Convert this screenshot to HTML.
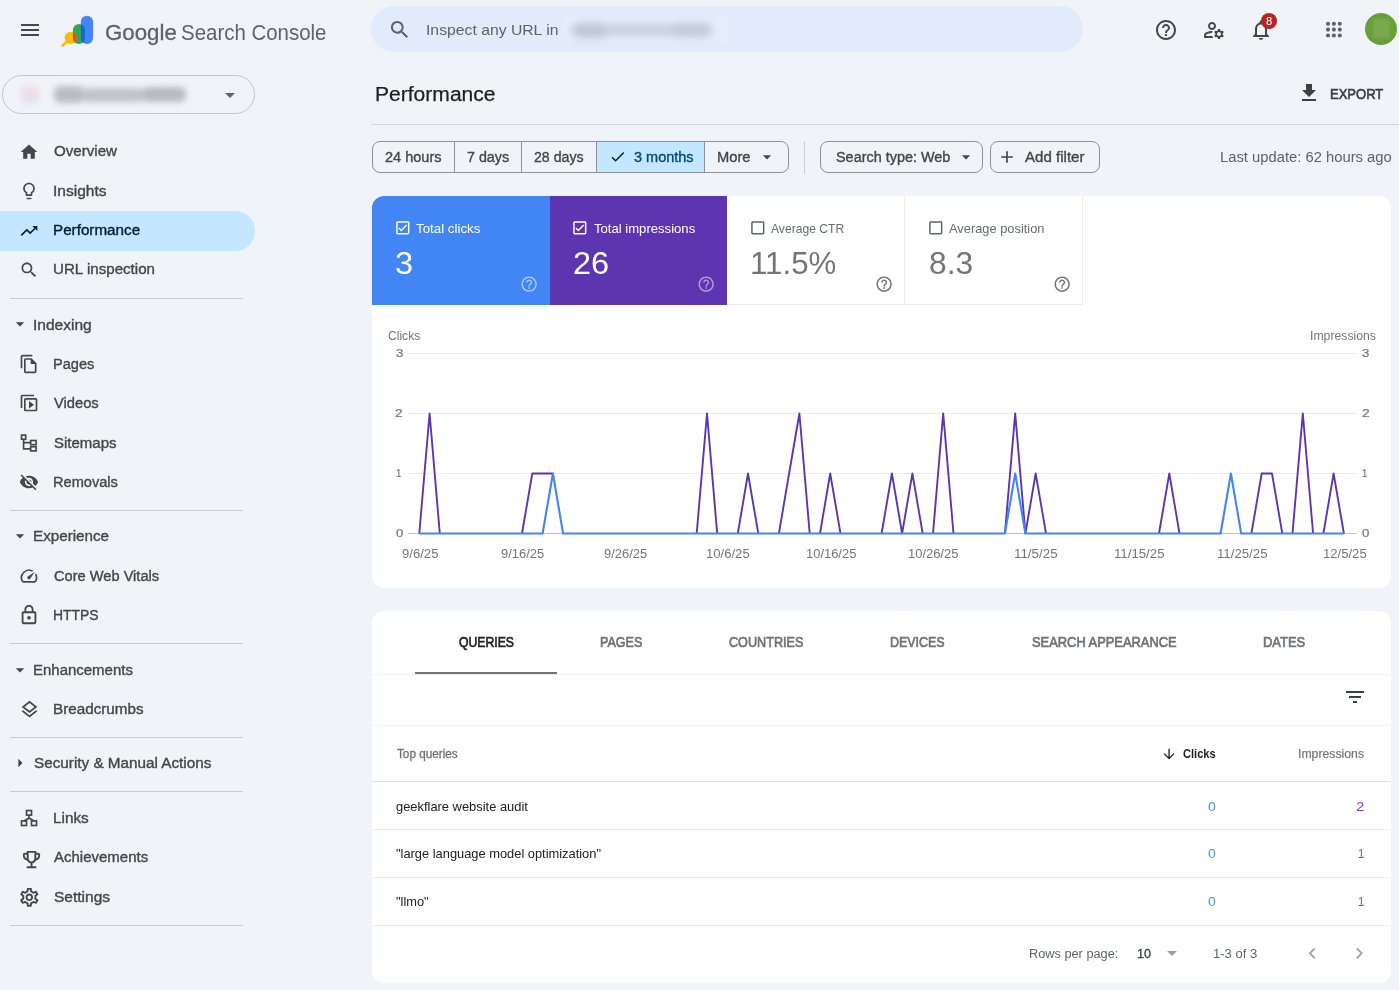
<!DOCTYPE html>
<html lang="en"><head><meta charset="utf-8"><title>Performance - Google Search Console</title>
<style>
html,body{margin:0;padding:0}
body{background:#f0f4f9;font-family:"Liberation Sans", sans-serif;}
#app{position:relative;width:1399px;height:990px;overflow:hidden;background:#f0f4f9}
.t{position:absolute;white-space:pre;line-height:1;transform-origin:0 50%;font-family:"Liberation Sans", sans-serif}
</style></head><body><div id="app">
<header>
<svg style="position:absolute;left:18px;top:18px;" width="24" height="24" viewBox="0 0 24 24"><path fill="#444746" d="M3 18h18v-2H3v2zm0-5h18v-2H3v2zm0-7v2h18V6H3z"/></svg>
<svg style="position:absolute;left:55px;top:8px" width="50" height="46" viewBox="55 8 50 46">
<rect x="80.8" y="15.7" width="12.3" height="28.3" rx="6.15" fill="#4285f4"/>
<rect x="72.9" y="24" width="12.1" height="20" rx="6.05" fill="#34a853"/>
<clipPath id="cg"><rect x="72.9" y="24" width="12.1" height="20" rx="6.05"/></clipPath>
<rect x="80.8" y="15.7" width="12.3" height="28.3" rx="6.15" fill="#1967d2" clip-path="url(#cg)"/>
<line x1="67.2" y1="41.3" x2="62.6" y2="45.6" stroke="#fbbc04" stroke-width="2.6" stroke-linecap="round"/>
<circle cx="70.65" cy="37.85" r="6.05" fill="#fbbc04"/>
<circle cx="70.65" cy="37.85" r="6.05" fill="#ea4335" clip-path="url(#cg)"/>
</svg>
<div style="position:absolute;left:371.25px;top:6px;width:711.25px;height:46px;background:#e2ebfb;border-radius:23px"></div>
<svg style="position:absolute;left:387.5px;top:18px;" width="23.5" height="23.5" viewBox="0 0 24 24"><path fill="#5f6368" d="M15.5 14h-.79l-.28-.27C15.41 12.59 16 11.11 16 9.5 16 5.91 13.09 3 9.5 3S3 5.91 3 9.5 5.91 16 9.5 16c1.61 0 3.09-.59 4.23-1.57l.27.28v.79l5 4.99L20.49 19l-4.99-5zm-6 0C7.01 14 5 11.99 5 9.5S7.01 5 9.5 5 14 7.01 14 9.5 11.99 14 9.5 14z"/></svg>
<div style="position:absolute;left:562px;top:16px;width:166px;height:27px;background:rgba(255,255,255,.16);filter:blur(2px)"></div>
<div style="position:absolute;left:560px;top:12px;width:170px;height:36px;filter:blur(4.5px);opacity:.8"><div style="position:absolute;left:12px;top:11px;width:36px;height:15px;border-radius:7px;background:#b3bccf"></div><div style="position:absolute;left:44px;top:12px;width:70px;height:12px;border-radius:6px;background:#c0c8da"></div><div style="position:absolute;left:110px;top:11px;width:42px;height:14px;border-radius:7px;background:#b8c0d3"></div></div>
<svg style="position:absolute;left:1154px;top:17.5px;" width="24" height="24" viewBox="0 0 24 24"><path fill="#444746" d="M11 18h2v-2h-2v2zm1-16C6.48 2 2 6.48 2 12s4.48 10 10 10 10-4.48 10-10S17.52 2 12 2zm0 18c-4.41 0-8-3.59-8-8s3.59-8 8-8 8 3.59 8 8-3.59 8-8 8zm0-14c-2.21 0-4 1.79-4 4h2c0-1.1.9-2 2-2s2 .9 2 2c0 2-3 1.75-3 5h2c0-2.25 3-2.5 3-5 0-2.21-1.79-4-4-4z"/></svg>
<svg style="position:absolute;left:1201.75px;top:18px;" width="24" height="24" viewBox="0 0 24 24"><path fill="#444746" d="M4 18v-.65c0-.34.16-.66.41-.81C6.1 15.53 8.03 15 10 15c.03 0 .05 0 .08.01.1-.7.3-1.37.59-1.98-.22-.02-.44-.03-.67-.03-2.42 0-4.68.67-6.61 1.82-.88.52-1.39 1.5-1.39 2.53V20h9.26c-.42-.6-.75-1.28-.97-2H4zM10 12c2.21 0 4-1.79 4-4s-1.79-4-4-4-4 1.79-4 4 1.79 4 4 4zm0-6c1.1 0 2 .9 2 2s-.9 2-2 2-2-.9-2-2 .9-2 2-2zM20.75 16c0-.22-.03-.42-.06-.63l1.14-1.01-1-1.73-1.45.49c-.32-.27-.68-.48-1.08-.63L18 11h-2l-.3 1.49c-.4.15-.76.36-1.08.63l-1.45-.49-1 1.73 1.14 1.01c-.03.21-.06.41-.06.63s.03.42.06.63l-1.14 1.01 1 1.73 1.45-.49c.32.27.68.48 1.08.63L16 21h2l.3-1.49c.4-.15.76-.36 1.08-.63l1.45.49 1-1.73-1.14-1.01c.03-.21.06-.41.06-.63zM17 18c-1.1 0-2-.9-2-2s.9-2 2-2 2 .9 2 2-.9 2-2 2z"/></svg>
<svg style="position:absolute;left:1249.2px;top:17.5px;" width="24" height="24" viewBox="0 0 24 24"><path fill="#444746" d="M12 22c1.1 0 2-.9 2-2h-4c0 1.1.9 2 2 2zm6-6v-5c0-3.07-1.63-5.64-4.5-6.32V4c0-.83-.67-1.5-1.5-1.5s-1.5.67-1.5 1.5v.68C7.64 5.36 6 7.92 6 11v5l-2 2v1h16v-1l-2-2zm-2 1H8v-6c0-2.48 1.51-4.5 4-4.5s4 2.02 4 4.5v6z"/></svg>
<div style="position:absolute;left:1260.5px;top:13px;width:16px;height:16px;border-radius:8px;background:#b8251f"></div>
<svg style="position:absolute;left:0;top:0" width="1399" height="60" fill="#5f6368"><circle cx="1328" cy="23.7" r="2.05"/><circle cx="1328" cy="29.6" r="2.05"/><circle cx="1328" cy="35.5" r="2.05"/><circle cx="1333.9" cy="23.7" r="2.05"/><circle cx="1333.9" cy="29.6" r="2.05"/><circle cx="1333.9" cy="35.5" r="2.05"/><circle cx="1339.8" cy="23.7" r="2.05"/><circle cx="1339.8" cy="29.6" r="2.05"/><circle cx="1339.8" cy="35.5" r="2.05"/></svg>
<div style="position:absolute;left:1365.1px;top:13.4px;width:32px;height:32px;border-radius:16px;background:#689f38;overflow:hidden"><div style="position:absolute;left:8px;top:5.5px;width:16.5px;height:19.5px;background:#79a84e;filter:blur(1.6px)"></div></div>
<div class="t" style="left:104.51px;top:22px;font-size:22.5px;color:#5f6368;-webkit-text-stroke:0.3px #5f6368;transform:scaleX(0.9894);">Google</div>
<div class="t" style="left:181.15px;top:23px;font-size:21.5px;color:#5f6368;transform:scaleX(0.9510);">Search Console</div>
<div class="t" style="left:426.28px;top:22px;font-size:15.5px;color:#5f6368;transform:scaleX(1.0156);">Inspect any URL in</div>
<div class="t" style="left:1265.89px;top:16px;font-size:11px;color:#fff;transform:scaleX(1.0286);">8</div>
</header>
<nav>
<div style="position:absolute;left:2px;top:75px;width:250.5px;height:37px;background:transparent;border:1px solid #c4c7c5;border-radius:20px"></div>
<div style="position:absolute;left:21px;top:86px;width:18px;height:18px;background:linear-gradient(#f6d5d5,#dcd9f3);filter:blur(3px);border-radius:3px;opacity:.75"></div>
<div style="position:absolute;left:44px;top:78px;width:156px;height:34px;filter:blur(3.2px);opacity:.8"><div style="position:absolute;left:10px;top:8px;width:30px;height:17px;border-radius:6px;background:#abafb4"></div><div style="position:absolute;left:38px;top:10px;width:62px;height:14px;border-radius:6px;background:#b3b7bb"></div><div style="position:absolute;left:98px;top:9px;width:44px;height:15px;border-radius:6px;background:#a9adb2"></div></div>
<svg style="position:absolute;left:218.3px;top:83px;" width="24" height="24" viewBox="0 0 24 24"><path fill="#5f6368" d="M7 10l5 5 5-5z"/></svg>
<div style="position:absolute;left:0px;top:211px;width:255px;height:39.5px;background:#c2e7ff;border-radius:0 20px 20px 0"></div>
<div style="position:absolute;left:10px;top:298px;width:232.6px;height:1px;background:#c9ccd0;"></div>
<div style="position:absolute;left:10px;top:510px;width:232.6px;height:1px;background:#c9ccd0;"></div>
<div style="position:absolute;left:10px;top:643px;width:232.6px;height:1px;background:#c9ccd0;"></div>
<div style="position:absolute;left:10px;top:737px;width:232.6px;height:1px;background:#c9ccd0;"></div>
<div style="position:absolute;left:10px;top:791px;width:232.6px;height:1px;background:#c9ccd0;"></div>
<div style="position:absolute;left:10px;top:925px;width:232.6px;height:1px;background:#c9ccd0;"></div>
<svg style="position:absolute;left:19.2px;top:142.0px;" width="20" height="20" viewBox="0 0 24 24"><path fill="#444746" d="M10 20v-6h4v6h5v-8h3L12 3 2 12h3v8z"/></svg>
<svg style="position:absolute;left:19.2px;top:181.3px;" width="20" height="20" viewBox="0 0 24 24"><path fill="#444746" d="M9 21c0 .55.45 1 1 1h4c.55 0 1-.45 1-1v-1H9v1zm3-19C8.14 2 5 5.14 5 9c0 2.38 1.19 4.47 3 5.74V17c0 .55.45 1 1 1h6c.55 0 1-.45 1-1v-2.26c1.81-1.27 3-3.36 3-5.74 0-3.86-3.14-7-7-7zm2.85 11.1l-.85.6V16h-4v-2.3l-.85-.6C7.8 12.16 7 10.63 7 9c0-2.76 2.24-5 5-5s5 2.24 5 5c0 1.63-.8 3.16-2.15 4.1z"/></svg>
<svg style="position:absolute;left:19.2px;top:220.6px;" width="20" height="20" viewBox="0 0 24 24"><path fill="#001d35" d="M16 6l2.29 2.29-4.88 4.88-4-4L2 16.59 3.41 18l6-6 4 4 6.3-6.29L22 12V6z"/></svg>
<svg style="position:absolute;left:19.2px;top:260.0px;" width="20" height="20" viewBox="0 0 24 24"><path fill="#444746" d="M15.5 14h-.79l-.28-.27C15.41 12.59 16 11.11 16 9.5 16 5.91 13.09 3 9.5 3S3 5.91 3 9.5 5.91 16 9.5 16c1.61 0 3.09-.59 4.23-1.57l.27.28v.79l5 4.99L20.49 19l-4.99-5zm-6 0C7.01 14 5 11.99 5 9.5S7.01 5 9.5 5 14 7.01 14 9.5 11.99 14 9.5 14z"/></svg>
<svg style="position:absolute;left:19.2px;top:354.0px;" width="20" height="20" viewBox="0 0 24 24"><path fill="#444746" d="M16 1H4c-1.1 0-2 .9-2 2v14h2V3h12V1zm-1 4H8c-1.1 0-1.99.9-1.99 2L6 21c0 1.1.89 2 1.99 2H19c1.1 0 2-.9 2-2V11l-6-6zM8 21V7h6v5h5v9H8z"/></svg>
<svg style="position:absolute;left:19.2px;top:393.4px;transform:scaleY(-1)" width="20" height="20" viewBox="0 0 24 24"><path fill="#444746" d="M4 6H2v14c0 1.1.9 2 2 2h14v-2H4V6zm16-4H8c-1.1 0-2 .9-2 2v12c0 1.1.9 2 2 2h12c1.1 0 2-.9 2-2V4c0-1.1-.9-2-2-2zm0 14H8V4h12v12zM12 5.5v9l6-4.5z"/></svg>
<svg style="position:absolute;left:19.2px;top:472.4px;" width="20" height="20" viewBox="0 0 24 24"><path fill="#444746" d="M12 7c2.76 0 5 2.24 5 5 0 .65-.13 1.26-.36 1.83l2.92 2.92c1.51-1.26 2.7-2.89 3.43-4.75-1.73-4.39-6-7.5-11-7.5-1.4 0-2.74.25-3.98.7l2.16 2.16C10.74 7.13 11.35 7 12 7zM2 4.27l2.28 2.28.46.46C3.08 8.3 1.78 10.02 1 12c1.73 4.39 6 7.5 11 7.5 1.55 0 3.03-.3 4.38-.84l.42.42L19.73 22 21 20.73 3.27 3 2 4.27zM7.53 9.8l1.55 1.55c-.05.21-.08.43-.08.65 0 1.66 1.34 3 3 3 .22 0 .44-.03.65-.08l1.55 1.55c-.67.33-1.41.53-2.2.53-2.76 0-5-2.24-5-5 0-.79.2-1.53.53-2.2zm4.31-.78l3.15 3.15.02-.16c0-1.66-1.34-3-3-3l-.17.01z"/></svg>
<svg style="position:absolute;left:19.0px;top:566.0px;" width="20" height="20" viewBox="0 0 24 24"><path fill="#444746" d="M20.38 8.57l-1.23 1.85a8 8 0 0 1-.22 7.58H5.07A8 8 0 0 1 15.58 6.85l1.85-1.23A10 10 0 0 0 3.35 19a2 2 0 0 0 1.72 1h13.85a2 2 0 0 0 1.74-1 10 10 0 0 0-.27-10.44zm-9.79 6.84a2 2 0 0 0 2.83 0l5.66-8.49-8.49 5.66a2 2 0 0 0 0 2.83z"/></svg>
<svg style="position:absolute;left:18.2px;top:603.8px;" width="22" height="22" viewBox="0 0 24 24"><path fill="#444746" d="M18 8h-1V6c0-2.76-2.24-5-5-5S7 3.24 7 6v2H6c-1.1 0-2 .9-2 2v10c0 1.1.9 2 2 2h12c1.1 0 2-.9 2-2V10c0-1.1-.9-2-2-2zM9 6c0-1.66 1.34-3 3-3s3 1.34 3 3v2H9V6zm9 14H6V10h12v10zm-6-3c1.1 0 2-.9 2-2s-.9-2-2-2-2 .9-2 2 .9 2 2 2z"/></svg>
<svg style="position:absolute;left:18.7px;top:698.9px;" width="21" height="21" viewBox="0 0 24 24"><path fill="#444746" d="M11.99 18.54l-7.37-5.73L3 14.07l9 7 9-7-1.63-1.27-7.38 5.74zM12 16l7.36-5.73L21 9l-9-7-9 7 1.63 1.27L12 16zm0-11.47L17.74 9 12 13.47 6.26 9 12 4.53z"/></svg>
<svg style="position:absolute;left:19.5px;top:848.3px;" width="23" height="23" viewBox="0 0 24 24"><path fill="#444746" d="M19 5h-2V3H7v2H5c-1.1 0-2 .9-2 2v1c0 2.55 1.92 4.63 4.39 4.94.63 1.5 1.98 2.63 3.61 2.96V19H7v2h10v-2h-4v-3.1c1.63-.33 2.98-1.46 3.61-2.96C19.08 12.63 21 10.55 21 8V7c0-1.1-.9-2-2-2zM5 8V7h2v3.82C5.84 10.4 5 9.3 5 8zm7 6c-1.65 0-3-1.35-3-3V5h6v6c0 1.65-1.35 3-3 3zm7-6c0 1.3-.84 2.4-2 2.82V7h2v1z"/></svg>
<svg style="position:absolute;left:17.9px;top:885.7px;" width="22.6" height="22.6" viewBox="0 0 24 24"><path fill="#444746" d="M19.43 12.98c.04-.32.07-.64.07-.98 0-.34-.03-.66-.07-.98l2.11-1.65c.19-.15.24-.42.12-.64l-2-3.46c-.09-.16-.26-.25-.44-.25-.06 0-.12.01-.17.03l-2.49 1c-.52-.4-1.08-.73-1.69-.98l-.38-2.65C14.46 2.18 14.25 2 14 2h-4c-.25 0-.46.18-.49.42l-.38 2.65c-.61.25-1.17.59-1.69.98l-2.49-1c-.06-.02-.12-.03-.18-.03-.17 0-.34.09-.43.25l-2 3.46c-.13.22-.07.49.12.64l2.11 1.65c-.04.32-.07.65-.07.98 0 .33.03.66.07.98l-2.11 1.65c-.19.15-.24.42-.12.64l2 3.46c.09.16.26.25.44.25.06 0 .12-.01.17-.03l2.49-1c.52.4 1.08.73 1.69.98l.38 2.65c.03.24.24.42.49.42h4c.25 0 .46-.18.49-.42l.38-2.65c.61-.25 1.17-.59 1.69-.98l2.49 1c.06.02.12.03.18.03.17 0 .34-.09.43-.25l2-3.46c.12-.22.07-.49-.12-.64l-2.11-1.65zm-1.98-1.71c.04.31.05.52.05.73 0 .21-.02.43-.05.73l-.14 1.13.89.7 1.08.84-.7 1.21-1.27-.51-1.04-.42-.9.68c-.43.32-.84.56-1.25.73l-1.06.43-.16 1.13-.2 1.35h-1.4l-.19-1.35-.16-1.13-1.06-.43c-.43-.18-.83-.41-1.23-.71l-.91-.7-1.06.43-1.27.51-.7-1.21 1.08-.84.89-.7-.14-1.13c-.03-.31-.05-.54-.05-.74s.02-.43.05-.73l.14-1.13-.89-.7-1.08-.84.7-1.21 1.27.51 1.04.42.9-.68c.43-.32.84-.56 1.25-.73l1.06-.43.16-1.13.2-1.35h1.39l.19 1.35.16 1.13 1.06.43c.43.18.83.41 1.23.71l.91.7 1.06-.43 1.27-.51.7 1.21-1.07.85-.89.7.14 1.13zM12 8c-2.21 0-4 1.79-4 4s1.79 4 4 4 4-1.79 4-4-1.79-4-4-4zm0 6c-1.1 0-2-.9-2-2s.9-2 2-2 2 .9 2 2-.9 2-2 2z"/></svg>
<svg style="position:absolute;left:19.2px;top:433px" width="20" height="20" viewBox="0 0 24 24" fill="none" stroke="#444746" stroke-width="2"><rect x="3" y="2.5" width="5" height="5"/><rect x="14" y="9" width="6.5" height="5"/><rect x="14" y="16.5" width="6.5" height="5"/><path d="M5.5 7.5V19H14M5.5 11.5H14"/></svg>
<svg style="position:absolute;left:19.2px;top:808px" width="20" height="20" viewBox="0 0 24 24" fill="none" stroke="#444746" stroke-width="2"><rect x="9" y="3" width="6" height="5.5"/><rect x="3" y="15.5" width="6" height="5.5"/><rect x="15" y="15.5" width="6" height="5.5"/><path d="M12 8.5V12L6 15.5M12 12l6 3.5"/></svg>
<svg style="position:absolute;left:9.8px;top:314.40000000000003px;" width="20" height="20" viewBox="0 0 24 24"><path fill="#444746" d="M7 10l5 5 5-5z"/></svg>
<svg style="position:absolute;left:9.8px;top:525.9px;" width="20" height="20" viewBox="0 0 24 24"><path fill="#444746" d="M7 10l5 5 5-5z"/></svg>
<svg style="position:absolute;left:9.8px;top:659.6px;" width="20" height="20" viewBox="0 0 24 24"><path fill="#444746" d="M7 10l5 5 5-5z"/></svg>
<svg style="position:absolute;left:9.6px;top:753.2px;" width="20" height="20" viewBox="0 0 24 24"><path fill="#444746" d="M10 17l5-5-5-5v10z"/></svg>
<div class="t" style="left:53.56px;top:144px;font-size:14px;color:#444746;-webkit-text-stroke:0.35px #444746;transform:scaleX(1.0793);">Overview</div>
<div class="t" style="left:52.99px;top:184px;font-size:14px;color:#444746;-webkit-text-stroke:0.35px #444746;transform:scaleX(1.1106);">Insights</div>
<div class="t" style="left:53.01px;top:223px;font-size:14px;color:#001d35;-webkit-text-stroke:0.35px #001d35;transform:scaleX(1.0870);">Performance</div>
<div class="t" style="left:53.02px;top:262px;font-size:14px;color:#444746;-webkit-text-stroke:0.35px #444746;transform:scaleX(1.0803);">URL inspection</div>
<div class="t" style="left:33.19px;top:318px;font-size:14px;color:#444746;-webkit-text-stroke:0.35px #444746;transform:scaleX(1.1083);">Indexing</div>
<div class="t" style="left:53.06px;top:357px;font-size:14px;color:#444746;-webkit-text-stroke:0.35px #444746;transform:scaleX(1.0390);">Pages</div>
<div class="t" style="left:54.36px;top:396px;font-size:14px;color:#444746;-webkit-text-stroke:0.35px #444746;transform:scaleX(1.0494);">Videos</div>
<div class="t" style="left:53.56px;top:436px;font-size:14px;color:#444746;-webkit-text-stroke:0.35px #444746;transform:scaleX(1.0713);">Sitemaps</div>
<div class="t" style="left:53.06px;top:475px;font-size:14px;color:#444746;-webkit-text-stroke:0.35px #444746;transform:scaleX(1.0426);">Removals</div>
<div class="t" style="left:33.21px;top:529px;font-size:14px;color:#444746;-webkit-text-stroke:0.35px #444746;transform:scaleX(1.0861);">Experience</div>
<div class="t" style="left:53.58px;top:569px;font-size:14px;color:#444746;-webkit-text-stroke:0.35px #444746;transform:scaleX(1.0446);">Core Web Vitals</div>
<div class="t" style="left:53.11px;top:608px;font-size:14px;color:#444746;-webkit-text-stroke:0.35px #444746;transform:scaleX(0.9933);">HTTPS</div>
<div class="t" style="left:33.23px;top:663px;font-size:14px;color:#444746;-webkit-text-stroke:0.35px #444746;transform:scaleX(1.0696);">Enhancements</div>
<div class="t" style="left:53.11px;top:702px;font-size:14px;color:#444746;-webkit-text-stroke:0.35px #444746;transform:scaleX(1.0878);">Breadcrumbs</div>
<div class="t" style="left:33.75px;top:756px;font-size:14px;color:#444746;-webkit-text-stroke:0.35px #444746;transform:scaleX(1.0906);">Security &amp; Manual Actions</div>
<div class="t" style="left:53.11px;top:811px;font-size:14px;color:#444746;-webkit-text-stroke:0.35px #444746;transform:scaleX(1.0921);">Links</div>
<div class="t" style="left:54.47px;top:850px;font-size:14px;color:#444746;-webkit-text-stroke:0.35px #444746;transform:scaleX(1.0705);">Achievements</div>
<div class="t" style="left:53.65px;top:890px;font-size:14px;color:#444746;-webkit-text-stroke:0.35px #444746;transform:scaleX(1.1075);">Settings</div>
</nav>
<main>
<svg style="position:absolute;left:1297.2px;top:80.8px;" width="24" height="24" viewBox="0 0 24 24"><path fill="#3c4043" d="M19 9h-4V3H9v6H5l7 7 7-7zM5 18v2h14v-2H5z"/></svg>
<div style="position:absolute;left:371px;top:124px;width:1028px;height:1px;background:#d3d7dc;"></div>
<div style="position:absolute;left:372px;top:141px;width:414.5px;height:30px;background:transparent;border:1px solid #8e9297;border-radius:8px"></div>
<div style="position:absolute;left:597px;top:142px;width:107.5px;height:30px;background:#c2e7ff;"></div>
<div style="position:absolute;left:454px;top:141px;width:1px;height:32px;background:#8e9297;"></div>
<div style="position:absolute;left:521px;top:141px;width:1px;height:32px;background:#8e9297;"></div>
<div style="position:absolute;left:596px;top:141px;width:1px;height:32px;background:#8e9297;"></div>
<div style="position:absolute;left:704px;top:141px;width:1px;height:32px;background:#8e9297;"></div>
<svg style="position:absolute;left:608.5px;top:148px;" width="17.5" height="17.5" viewBox="0 0 24 24"><path fill="#001d35" d="M9 16.17L4.83 12l-1.42 1.41L9 19 21 7l-1.41-1.41z"/></svg>
<svg style="position:absolute;left:757px;top:147px;" width="20" height="20" viewBox="0 0 24 24"><path fill="#444746" d="M7 10l5 5 5-5z"/></svg>
<div style="position:absolute;left:804px;top:141px;width:1px;height:32px;background:#c9ccd0;"></div>
<div style="position:absolute;left:820px;top:141px;width:160.5px;height:30px;background:transparent;border:1px solid #8e9297;border-radius:8px"></div>
<svg style="position:absolute;left:956px;top:147px;" width="20" height="20" viewBox="0 0 24 24"><path fill="#444746" d="M7 10l5 5 5-5z"/></svg>
<div style="position:absolute;left:990px;top:141px;width:108px;height:30px;background:transparent;border:1px solid #8e9297;border-radius:8px"></div>
<svg style="position:absolute;left:997px;top:147px;" width="20" height="20" viewBox="0 0 24 24"><path fill="#444746" d="M19 13h-6v6h-2v-6H5v-2h6V5h2v6h6v2z"/></svg>
<div style="position:absolute;left:372px;top:196px;width:1019px;height:391.5px;background:#fff;border-radius:12px"></div>
<div style="position:absolute;left:372px;top:196px;width:178px;height:109px;background:#4285f4;border-radius:12px 0 0 0"></div>
<div style="position:absolute;left:550px;top:196px;width:177px;height:109px;background:#5e35b1;"></div>
<div style="position:absolute;left:727px;top:196px;width:177.5px;height:109px;background:#fff;border-right:1px solid #ececec;border-bottom:1px solid #ececec;box-sizing:border-box"></div>
<div style="position:absolute;left:904.5px;top:196px;width:178px;height:109px;background:#fff;border-right:1px solid #ececec;border-bottom:1px solid #ececec;box-sizing:border-box"></div>
<svg style="position:absolute;left:393.55px;top:219.05px;" width="17.6" height="17.6" viewBox="0 0 24 24"><path fill="#fff" d="M19 3H5c-1.1 0-2 .9-2 2v14c0 1.1.9 2 2 2h14c1.1 0 2-.9 2-2V5c0-1.1-.9-2-2-2zm0 16H5V5h14v14zM17.99 9l-1.41-1.42-6.59 6.59-2.58-2.57-1.42 1.41 4 3.99z"/></svg>
<svg style="position:absolute;left:571.05px;top:219.05px;" width="17.6" height="17.6" viewBox="0 0 24 24"><path fill="#fff" d="M19 3H5c-1.1 0-2 .9-2 2v14c0 1.1.9 2 2 2h14c1.1 0 2-.9 2-2V5c0-1.1-.9-2-2-2zm0 16H5V5h14v14zM17.99 9l-1.41-1.42-6.59 6.59-2.58-2.57-1.42 1.41 4 3.99z"/></svg>
<svg style="position:absolute;left:749.05px;top:219.05px;" width="17.6" height="17.6" viewBox="0 0 24 24"><path fill="#5f6368" d="M19 5v14H5V5h14m0-2H5c-1.1 0-2 .9-2 2v14c0 1.1.9 2 2 2h14c1.1 0 2-.9 2-2V5c0-1.1-.9-2-2-2z"/></svg>
<svg style="position:absolute;left:926.65px;top:219.05px;" width="17.6" height="17.6" viewBox="0 0 24 24"><path fill="#5f6368" d="M19 5v14H5V5h14m0-2H5c-1.1 0-2 .9-2 2v14c0 1.1.9 2 2 2h14c1.1 0 2-.9 2-2V5c0-1.1-.9-2-2-2z"/></svg>
<svg style="position:absolute;left:519.85px;top:275.35px;" width="18.3" height="18.3" viewBox="0 0 24 24"><path fill="rgba(255,255,255,.55)" d="M11 18h2v-2h-2v2zm1-16C6.48 2 2 6.48 2 12s4.48 10 10 10 10-4.48 10-10S17.52 2 12 2zm0 18c-4.41 0-8-3.59-8-8s3.59-8 8-8 8 3.59 8 8-3.59 8-8 8zm0-14c-2.21 0-4 1.79-4 4h2c0-1.1.9-2 2-2s2 .9 2 2c0 2-3 1.75-3 5h2c0-2.25 3-2.5 3-5 0-2.21-1.79-4-4-4z"/></svg>
<svg style="position:absolute;left:697.25px;top:275.35px;" width="18.3" height="18.3" viewBox="0 0 24 24"><path fill="rgba(255,255,255,.5)" d="M11 18h2v-2h-2v2zm1-16C6.48 2 2 6.48 2 12s4.48 10 10 10 10-4.48 10-10S17.52 2 12 2zm0 18c-4.41 0-8-3.59-8-8s3.59-8 8-8 8 3.59 8 8-3.59 8-8 8zm0-14c-2.21 0-4 1.79-4 4h2c0-1.1.9-2 2-2s2 .9 2 2c0 2-3 1.75-3 5h2c0-2.25 3-2.5 3-5 0-2.21-1.79-4-4-4z"/></svg>
<svg style="position:absolute;left:874.85px;top:275.35px;" width="18.3" height="18.3" viewBox="0 0 24 24"><path fill="#757575" d="M11 18h2v-2h-2v2zm1-16C6.48 2 2 6.48 2 12s4.48 10 10 10 10-4.48 10-10S17.52 2 12 2zm0 18c-4.41 0-8-3.59-8-8s3.59-8 8-8 8 3.59 8 8-3.59 8-8 8zm0-14c-2.21 0-4 1.79-4 4h2c0-1.1.9-2 2-2s2 .9 2 2c0 2-3 1.75-3 5h2c0-2.25 3-2.5 3-5 0-2.21-1.79-4-4-4z"/></svg>
<svg style="position:absolute;left:1052.55px;top:275.35px;" width="18.3" height="18.3" viewBox="0 0 24 24"><path fill="#757575" d="M11 18h2v-2h-2v2zm1-16C6.48 2 2 6.48 2 12s4.48 10 10 10 10-4.48 10-10S17.52 2 12 2zm0 18c-4.41 0-8-3.59-8-8s3.59-8 8-8 8 3.59 8 8-3.59 8-8 8zm0-14c-2.21 0-4 1.79-4 4h2c0-1.1.9-2 2-2s2 .9 2 2c0 2-3 1.75-3 5h2c0-2.25 3-2.5 3-5 0-2.21-1.79-4-4-4z"/></svg>
<svg style="position:absolute;left:0;top:320px" width="1399" height="260" viewBox="0 320 1399 260"><line x1="408" x2="1356" y1="353.5" y2="353.5" stroke="#ebebeb" stroke-width="1"/><line x1="408" x2="1356" y1="413.5" y2="413.5" stroke="#ebebeb" stroke-width="1"/><line x1="408" x2="1356" y1="473.5" y2="473.5" stroke="#ebebeb" stroke-width="1"/><line x1="408" x2="1356" y1="533.5" y2="533.5" stroke="#bdbdbd" stroke-width="1"/><g fill="none" stroke="#5e35b1" stroke-width="1.9" stroke-linejoin="round"><polyline points="419.3,533.5 429.6,413.5 439.8,533.5"/><polyline points="522.0,533.5 532.3,473.5 542.6,473.5 552.9,473.5"/><polyline points="696.7,533.5 707.0,413.5 717.2,533.5"/><polyline points="737.8,533.5 748.0,473.5 758.3,533.5"/><polyline points="778.9,533.5 789.1,473.5 799.4,413.5 809.7,533.5"/><polyline points="820.0,533.5 830.2,473.5 840.5,533.5"/><polyline points="881.6,533.5 891.9,473.5 902.1,533.5"/><polyline points="902.1,533.5 912.4,473.5 922.7,533.5"/><polyline points="933.0,533.5 943.2,413.5 953.5,533.5"/><polyline points="1004.9,533.5 1015.2,413.5 1025.4,533.5"/><polyline points="1025.4,533.5 1035.7,473.5 1046.0,533.5"/><polyline points="1159.0,533.5 1169.3,473.5 1179.5,533.5"/><polyline points="1251.4,533.5 1261.7,473.5 1272.0,473.5 1282.3,533.5"/><polyline points="1292.5,533.5 1302.8,413.5 1313.1,533.5"/><polyline points="1323.4,533.5 1333.6,473.5 1343.9,533.5"/></g><polyline fill="none" stroke="#4285f4" stroke-width="2.1" stroke-linejoin="round" points="419.3,533.5 429.6,533.5 439.8,533.5 450.1,533.5 460.4,533.5 470.7,533.5 480.9,533.5 491.2,533.5 501.5,533.5 511.8,533.5 522.0,533.5 532.3,533.5 542.6,533.5 552.9,473.5 563.1,533.5 573.4,533.5 583.7,533.5 593.9,533.5 604.2,533.5 614.5,533.5 624.8,533.5 635.0,533.5 645.3,533.5 655.6,533.5 665.9,533.5 676.1,533.5 686.4,533.5 696.7,533.5 707.0,533.5 717.2,533.5 727.5,533.5 737.8,533.5 748.0,533.5 758.3,533.5 768.6,533.5 778.9,533.5 789.1,533.5 799.4,533.5 809.7,533.5 820.0,533.5 830.2,533.5 840.5,533.5 850.8,533.5 861.1,533.5 871.3,533.5 881.6,533.5 891.9,533.5 902.1,533.5 912.4,533.5 922.7,533.5 933.0,533.5 943.2,533.5 953.5,533.5 963.8,533.5 974.1,533.5 984.3,533.5 994.6,533.5 1004.9,533.5 1015.2,473.5 1025.4,533.5 1035.7,533.5 1046.0,533.5 1056.2,533.5 1066.5,533.5 1076.8,533.5 1087.1,533.5 1097.3,533.5 1107.6,533.5 1117.9,533.5 1128.2,533.5 1138.4,533.5 1148.7,533.5 1159.0,533.5 1169.3,533.5 1179.5,533.5 1189.8,533.5 1200.1,533.5 1210.3,533.5 1220.6,533.5 1230.9,473.5 1241.2,533.5 1251.4,533.5 1261.7,533.5 1272.0,533.5 1282.3,533.5 1292.5,533.5 1302.8,533.5 1313.1,533.5 1323.4,533.5 1333.6,533.5 1343.9,533.5"/></svg>
<div style="position:absolute;left:372px;top:611px;width:1019px;height:371.5px;background:#fff;border-radius:12px"></div>
<div style="position:absolute;left:372px;top:674px;width:1019px;height:1px;background:#eeeeee;"></div>
<div style="position:absolute;left:415px;top:671.6px;width:142px;height:2.6px;background:#757575;"></div>
<div style="position:absolute;left:372px;top:725px;width:1019px;height:1px;background:#eeeeee;"></div>
<div style="position:absolute;left:372px;top:781px;width:1019px;height:1px;background:#e0e0e0;"></div>
<div style="position:absolute;left:372px;top:829px;width:1019px;height:1px;background:#ececec;"></div>
<div style="position:absolute;left:372px;top:877px;width:1019px;height:1px;background:#ececec;"></div>
<div style="position:absolute;left:372px;top:925px;width:1019px;height:1px;background:#ececec;"></div>
<svg style="position:absolute;left:1342.8px;top:684.9px;" width="24" height="24" viewBox="0 0 24 24"><path fill="#3c4043" d="M10 18h4v-2h-4v2zM3 6v2h18V6H3zm3 7h12v-2H6v2z"/></svg>
<svg style="position:absolute;left:1161.2px;top:745.7px;" width="16.2" height="16.2" viewBox="0 0 24 24"><path fill="#202124" d="M20 12l-1.41-1.41L13 16.17V4h-2v12.17l-5.58-5.59L4 12l8 8 8-8z"/></svg>
<svg style="position:absolute;left:1160px;top:941px;" width="24" height="24" viewBox="0 0 24 24"><path fill="#9e9e9e" d="M7 10l5 5 5-5z"/></svg>
<svg style="position:absolute;left:1300.6px;top:942.4px;" width="22.5" height="22.5" viewBox="0 0 24 24"><path fill="#a3a3a3" d="M15.41 7.41L14 6l-6 6 6 6 1.41-1.41L10.83 12z"/></svg>
<svg style="position:absolute;left:1348.2px;top:942.4px;" width="22.5" height="22.5" viewBox="0 0 24 24"><path fill="#a3a3a3" d="M10 6L8.59 7.41 13.17 12l-4.58 4.59L10 18l6-6z"/></svg>
<div class="t" style="left:375.13px;top:85px;font-size:19.5px;color:#1f1f1f;-webkit-text-stroke:0.25px #1f1f1f;transform:scaleX(1.0799);">Performance</div>
<div class="t" style="left:1329.80px;top:87px;font-size:14px;color:#3c4043;-webkit-text-stroke:0.6px #3c4043;transform:scaleX(0.9292);">EXPORT</div>
<div class="t" style="left:384.98px;top:150px;font-size:14px;color:#444746;-webkit-text-stroke:0.35px #444746;transform:scaleX(1.0372);">24 hours</div>
<div class="t" style="left:466.99px;top:150px;font-size:14px;color:#444746;-webkit-text-stroke:0.35px #444746;transform:scaleX(1.0185);">7 days</div>
<div class="t" style="left:534.49px;top:150px;font-size:14px;color:#444746;-webkit-text-stroke:0.35px #444746;transform:scaleX(1.0104);">28 days</div>
<div class="t" style="left:634.49px;top:150px;font-size:14px;color:#004a77;-webkit-text-stroke:0.35px #004a77;transform:scaleX(1.0351);">3 months</div>
<div class="t" style="left:716.95px;top:150px;font-size:14px;color:#444746;-webkit-text-stroke:0.35px #444746;transform:scaleX(1.0492);">More</div>
<div class="t" style="left:835.74px;top:150px;font-size:14px;color:#444746;-webkit-text-stroke:0.35px #444746;transform:scaleX(1.0295);">Search type: Web</div>
<div class="t" style="left:1025.02px;top:150px;font-size:14px;color:#444746;-webkit-text-stroke:0.35px #444746;transform:scaleX(1.0766);">Add filter</div>
<div class="t" style="left:1219.84px;top:150px;font-size:14px;color:#5f6368;transform:scaleX(1.0559);">Last update: 62 hours ago</div>
<div class="t" style="left:415.99px;top:222px;font-size:13px;color:#fff;transform:scaleX(1.0241);">Total clicks</div>
<div class="t" style="left:593.50px;top:222px;font-size:13px;color:#fff;transform:scaleX(1.0075);">Total impressions</div>
<div class="t" style="left:771.00px;top:222px;font-size:13px;color:#686c70;transform:scaleX(0.9325);">Average CTR</div>
<div class="t" style="left:948.50px;top:222px;font-size:13px;color:#686c70;transform:scaleX(0.9880);">Average position</div>
<div class="t" style="left:395.41px;top:248px;font-size:30.5px;color:#fff;transform:scaleX(1.0690);">3</div>
<div class="t" style="left:573.20px;top:248px;font-size:30.5px;color:#fff;transform:scaleX(1.0645);">26</div>
<div class="t" style="left:750.19px;top:248px;font-size:30.5px;color:#757575;transform:scaleX(1.0247);">11.5%</div>
<div class="t" style="left:928.80px;top:248px;font-size:30.5px;color:#757575;transform:scaleX(1.0415);">8.3</div>
<div class="t" style="left:387.75px;top:330px;font-size:12px;color:#757575;transform:scaleX(1.0081);">Clicks</div>
<div class="t" style="left:1309.73px;top:330px;font-size:12px;color:#757575;transform:scaleX(1.0198);">Impressions</div>
<div class="t" style="left:395.61px;top:528px;font-size:11.5px;color:#757575;-webkit-text-stroke:0.2px #757575;transform:scaleX(1.1478);">0</div>
<div class="t" style="left:1361.81px;top:528px;font-size:11.5px;color:#757575;-webkit-text-stroke:0.2px #757575;transform:scaleX(1.1478);">0</div>
<div class="t" style="left:396.37px;top:468px;font-size:11.5px;color:#757575;-webkit-text-stroke:0.2px #757575;transform:scaleX(0.8381);">1</div>
<div class="t" style="left:1362.37px;top:468px;font-size:11.5px;color:#757575;-webkit-text-stroke:0.2px #757575;transform:scaleX(0.8381);">1</div>
<div class="t" style="left:395.30px;top:408px;font-size:11.5px;color:#757575;-webkit-text-stroke:0.2px #757575;transform:scaleX(1.2000);">2</div>
<div class="t" style="left:1361.50px;top:408px;font-size:11.5px;color:#757575;-webkit-text-stroke:0.2px #757575;transform:scaleX(1.2000);">2</div>
<div class="t" style="left:395.61px;top:348px;font-size:11.5px;color:#757575;-webkit-text-stroke:0.2px #757575;transform:scaleX(1.1478);">3</div>
<div class="t" style="left:1361.81px;top:348px;font-size:11.5px;color:#757575;-webkit-text-stroke:0.2px #757575;transform:scaleX(1.1478);">3</div>
<div class="t" style="left:401.90px;top:548px;font-size:12px;color:#757575;transform:scaleX(1.0923);">9/6/25</div>
<div class="t" style="left:501.39px;top:548px;font-size:12px;color:#757575;transform:scaleX(1.0769);">9/16/25</div>
<div class="t" style="left:604.13px;top:548px;font-size:12px;color:#757575;transform:scaleX(1.0769);">9/26/25</div>
<div class="t" style="left:706.31px;top:548px;font-size:12px;color:#757575;transform:scaleX(1.0909);">10/6/25</div>
<div class="t" style="left:805.68px;top:548px;font-size:12px;color:#757575;transform:scaleX(1.0773);">10/16/25</div>
<div class="t" style="left:908.41px;top:548px;font-size:12px;color:#757575;transform:scaleX(1.0773);">10/26/25</div>
<div class="t" style="left:1014.49px;top:548px;font-size:12px;color:#757575;transform:scaleX(1.1126);">11/5/25</div>
<div class="t" style="left:1113.86px;top:548px;font-size:12px;color:#757575;transform:scaleX(1.1017);">11/15/25</div>
<div class="t" style="left:1216.59px;top:548px;font-size:12px;color:#757575;transform:scaleX(1.1017);">11/25/25</div>
<div class="t" style="left:1322.71px;top:548px;font-size:12px;color:#757575;transform:scaleX(1.0909);">12/5/25</div>
<div class="t" style="left:459.03px;top:635px;font-size:14px;color:#202124;-webkit-text-stroke:0.65px #202124;transform:scaleX(0.8720);">QUERIES</div>
<div class="t" style="left:600.33px;top:635px;font-size:14px;color:#6f7275;-webkit-text-stroke:0.65px #6f7275;transform:scaleX(0.8973);">PAGES</div>
<div class="t" style="left:729.27px;top:635px;font-size:14px;color:#6f7275;-webkit-text-stroke:0.65px #6f7275;transform:scaleX(0.9024);">COUNTRIES</div>
<div class="t" style="left:890.23px;top:635px;font-size:14px;color:#6f7275;-webkit-text-stroke:0.65px #6f7275;transform:scaleX(0.8893);">DEVICES</div>
<div class="t" style="left:1031.57px;top:635px;font-size:14px;color:#6f7275;-webkit-text-stroke:0.65px #6f7275;transform:scaleX(0.9206);">SEARCH APPEARANCE</div>
<div class="t" style="left:1262.61px;top:635px;font-size:14px;color:#6f7275;-webkit-text-stroke:0.65px #6f7275;transform:scaleX(0.9258);">DATES</div>
<div class="t" style="left:396.90px;top:748px;font-size:12px;color:#757575;-webkit-text-stroke:0.35px #757575;transform:scaleX(0.9781);">Top queries</div>
<div class="t" style="left:1183.24px;top:748px;font-size:12px;color:#202124;font-weight:700;transform:scaleX(0.9246);">Clicks</div>
<div class="t" style="left:1297.98px;top:748px;font-size:12px;color:#757575;-webkit-text-stroke:0.2px #757575;transform:scaleX(1.0205);">Impressions</div>
<div class="t" style="left:396.00px;top:800px;font-size:13px;color:#202124;transform:scaleX(0.9917);">geekflare website audit</div>
<div class="t" style="left:1208.36px;top:800px;font-size:13px;color:#4a8fe3;transform:scaleX(1.0720);">0</div>
<div class="t" style="left:1356.33px;top:800px;font-size:13px;color:#9140b8;transform:scaleX(1.1500);">2</div>
<div class="t" style="left:396.01px;top:847px;font-size:13px;color:#202124;transform:scaleX(0.9891);">&quot;large language model optimization&quot;</div>
<div class="t" style="left:1208.36px;top:847px;font-size:13px;color:#4a8fe3;transform:scaleX(1.0720);">0</div>
<div class="t" style="left:1357.83px;top:847px;font-size:13px;color:#9140b8;transform:scaleX(0.8727);">1</div>
<div class="t" style="left:396.01px;top:895px;font-size:13px;color:#202124;transform:scaleX(0.9875);">&quot;llmo&quot;</div>
<div class="t" style="left:1208.36px;top:895px;font-size:13px;color:#4a8fe3;transform:scaleX(1.0720);">0</div>
<div class="t" style="left:1357.83px;top:895px;font-size:13px;color:#9140b8;transform:scaleX(0.8727);">1</div>
<div class="t" style="left:1028.94px;top:948px;font-size:12px;color:#5f6368;transform:scaleX(1.0622);">Rows per page:</div>
<div class="t" style="left:1136.71px;top:948px;font-size:12px;color:#3c4043;-webkit-text-stroke:0.3px #3c4043;transform:scaleX(1.0531);">10</div>
<div class="t" style="left:1213.21px;top:948px;font-size:12px;color:#5f6368;transform:scaleX(1.0879);">1-3 of 3</div>
</main>
</div></body></html>
